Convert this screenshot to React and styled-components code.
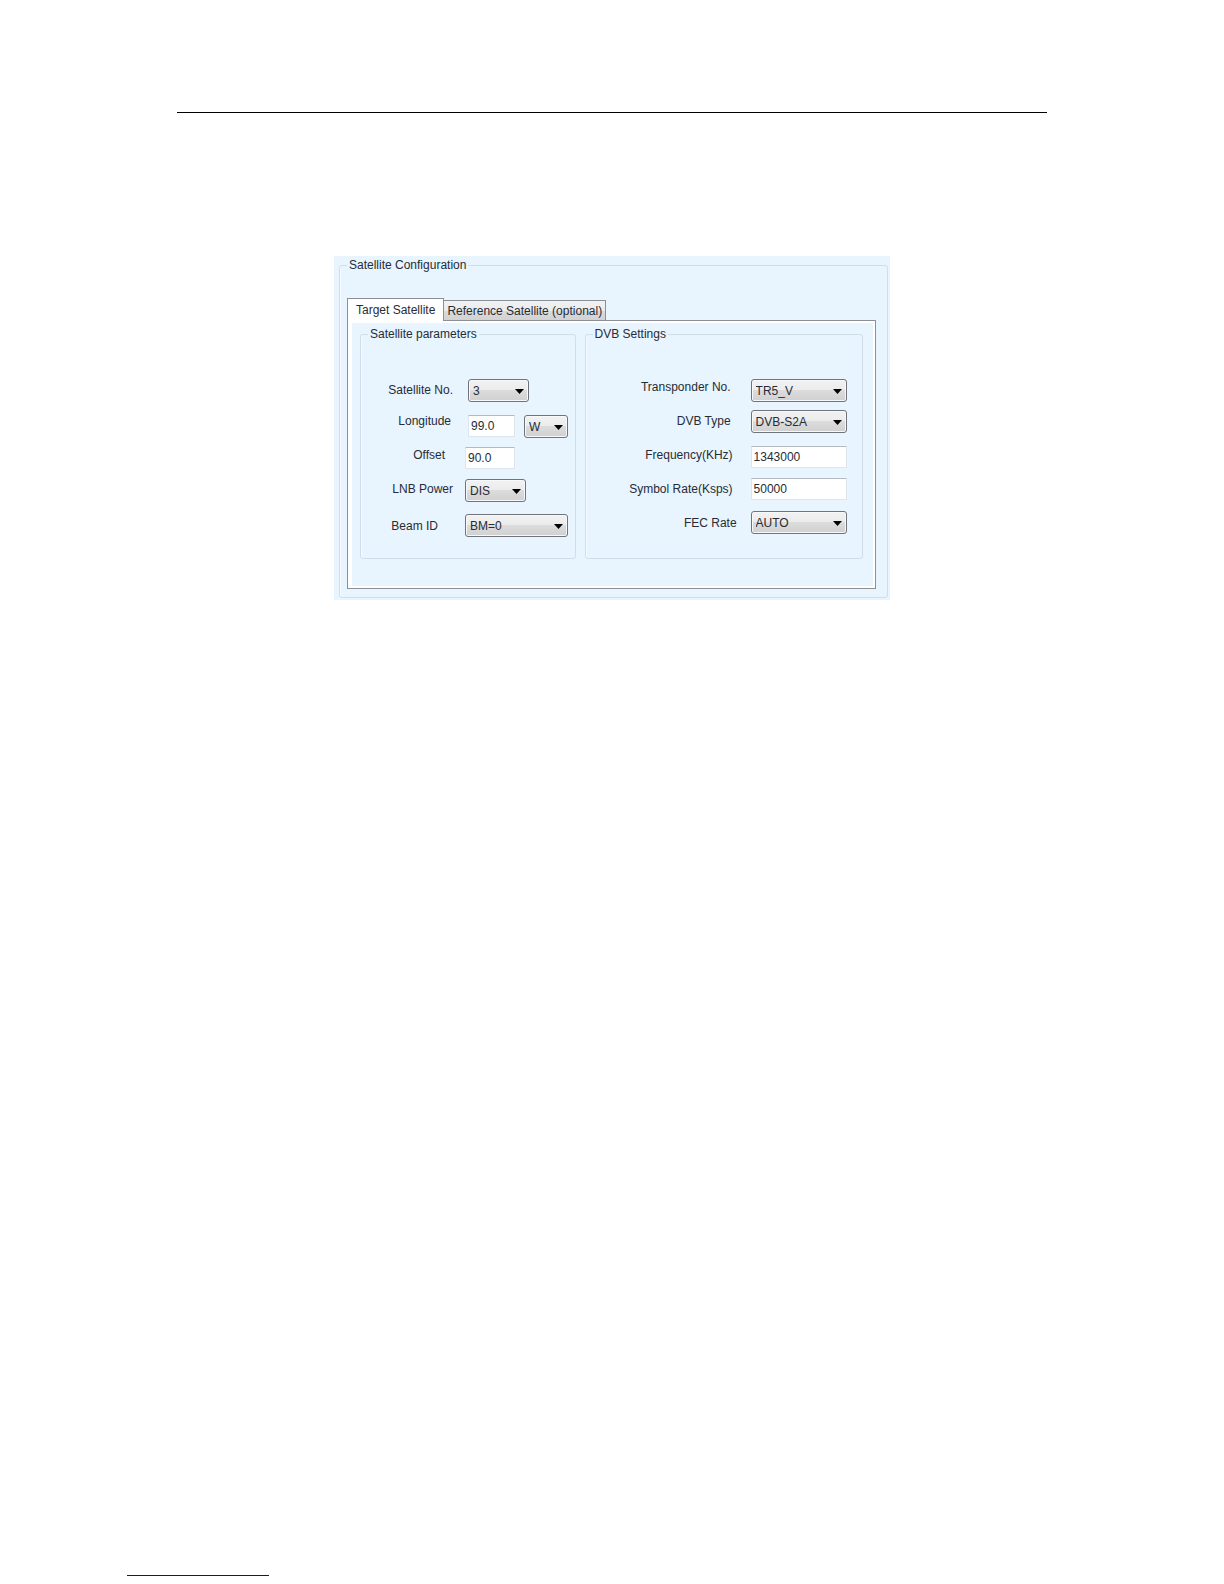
import React, { useState } from "react";
import styled, { createGlobalStyle } from "styled-components";

const GlobalStyle = createGlobalStyle`
  *, *::before, *::after { box-sizing: border-box; }
  body { margin: 0; background: #fff; }
  body, button, input, select {
    font-family: "Liberation Sans", Arial, sans-serif;
    font-size: 12px;
    line-height: 16px;
    color: #262c36;
  }
`;

const Page = styled.main`
  display: flex;
  flex-direction: column;
  padding: 112px 127px 8px;
`;

const HeaderRule = styled.hr`
  width: calc(100% - 100px);
  height: 1px;
  margin: 0 auto 143px;
  border: 0;
  background: #000;
`;

const FooterRule = styled.hr`
  width: 142px;
  height: 1px;
  margin: 975px 0 0;
  border: 0;
  background: #10107c;
`;

const Panel = styled.section`
  width: 100%;
  max-width: 556px;
  margin: 0 auto;
  padding: 1px 2px 2px 5px;
  background: #e8f4fe;
`;

const Group = styled.fieldset`
  min-width: 0;
  margin: 0;
  padding: ${(p) => p.$padding || "0"};
  border: 1px solid #cfdfea;
  border-radius: 3px;
  box-shadow: inset 1px 0 #f4faff;
`;

const Legend = styled.legend`
  margin-left: ${(p) => p.$indent}px;
  padding: 0 2px;
`;

const TabList = styled.div`
  display: flex;
  align-items: flex-end;
`;

const Tab = styled.button`
  height: ${(p) => (p.$active ? 23 : 20)}px;
  margin: 0 0 ${(p) => (p.$active ? -1 : 0)}px;
  padding: 0 ${(p) => (p.$active ? 8 : 3)}px;
  border: 1px solid #8b8f98;
  border-bottom: 0;
  border-left-width: ${(p) => (p.$first ? 1 : 0)}px;
  background: ${(p) => (p.$active ? "#fff" : "linear-gradient(#f2f2f2, #ebebeb 50%, #dadada 50%, #d2d2d2)")};
  position: relative;
  white-space: nowrap;
`;

const TabPanel = styled.div`
  display: grid;
  grid-template-columns: 216fr 279fr;
  gap: 9px;
  padding: 5px 12px 29px;
  border: 1px solid #8b8f98;
  outline: 2px solid #fff;
  outline-offset: -3px;
  box-shadow: inset 4px 0 #fff;
  background: #e8f4fe;
`;

const Columns = styled.div`
  display: grid;
  grid-template-columns: ${(p) => p.$labels}px 1fr;
`;

const Stack = styled.div`
  display: grid;
  grid-template-rows: ${(p) => p.$rows};
  align-items: start;
  align-content: start;
  padding-top: ${(p) => p.$top || 0}px;
`;

const Label = styled.label`
  padding-right: ${(p) => p.$gap}px;
  text-align: right;
  white-space: nowrap;
`;

const Line = styled.div`
  display: flex;
  gap: 9px;
  padding-left: ${(p) => (p.$inset ? 3 : 0)}px;
`;

const Box = styled.input`
  width: ${(p) => p.$width}px;
  height: 22px;
  padding: 0 2px;
  border: 1px solid #dde5ee;
  border-top-color: #b4bac4;
  background: #fff;
`;

const SelectWrap = styled.span`
  position: relative;
  display: block;
  width: ${(p) => p.$width}px;
  height: 23px;
`;

const Select = styled.select`
  appearance: none;
  width: 100%;
  height: 100%;
  padding: 0 16px 0 4px;
  border: 1px solid #70747a;
  border-radius: 3px;
  background: linear-gradient(#f2f2f2, #ebebeb 50%, #dcdcdc 50%, #d0d0d0);
  box-shadow: inset 0 0 0 1px #f6f8fa;
`;

const Arrow = styled.svg`
  position: absolute;
  right: 5px;
  top: 10px;
  pointer-events: none;
`;

function Dropdown({ id, width, value, label }) {
  return (
    <SelectWrap $width={width}>
      <Select id={id} aria-label={label} defaultValue={value}>
        <option>{value}</option>
      </Select>
      <Arrow width="9" height="5" viewBox="0 0 9 5" aria-hidden="true">
        <path d="M0 0H9L4.5 5Z" fill="#000" />
      </Arrow>
    </SelectWrap>
  );
}

export default function App() {
  const [tab, setTab] = useState(0);
  return (
    <Page>
      <GlobalStyle />
      <HeaderRule />
      <Panel>
        <Group $padding="25px 11px 8px 7px">
          <Legend $indent={0}>Satellite Configuration</Legend>
          <TabList role="tablist">
            {["Target Satellite", "Reference Satellite (optional)"].map((name, i) => (
              <Tab
                key={name}
                type="button"
                role="tab"
                aria-selected={tab === i}
                $active={tab === i}
                $first={i === 0}
                onClick={() => setTab(i)}
              >
                {name}
              </Tab>
            ))}
          </TabList>
          <TabPanel role="tabpanel">
            <Group $padding="37px 0 21px">
              <Legend $indent={7}>Satellite parameters</Legend>
              <Columns $labels={104}>
                <Stack $rows="31px 34px 34px 37px 16px" $top={3}>
                  <Label htmlFor="satNo" $gap={12}>Satellite No.</Label>
                  <Label htmlFor="longitude" $gap={14}>Longitude</Label>
                  <Label htmlFor="offset" $gap={20}>Offset</Label>
                  <Label htmlFor="lnb" $gap={12}>LNB Power</Label>
                  <Label htmlFor="beam" $gap={27}>Beam ID</Label>
                </Stack>
                <Stack $rows="36px 32px 32px 35px 23px">
                  <Line $inset>
                    <Dropdown id="satNo" width={61} value="3" />
                  </Line>
                  <Line $inset>
                    <Box id="longitude" $width={47} defaultValue="99.0" />
                    <Dropdown width={44} value="W" label="Hemisphere" />
                  </Line>
                  <Box id="offset" $width={50} defaultValue="90.0" />
                  <Dropdown id="lnb" width={61} value="DIS" />
                  <Dropdown id="beam" width={103} value="BM=0" />
                </Stack>
              </Columns>
            </Group>
            <Group $padding="37px 0 21px">
              <Legend $indent={7}>DVB Settings</Legend>
              <Columns $labels={165}>
                <Stack $rows="34px 34px 34px 34px 16px">
                  <Label htmlFor="transponder" $gap={20}>Transponder No.</Label>
                  <Label htmlFor="dvbType" $gap={20}>DVB Type</Label>
                  <Label htmlFor="frequency" $gap={18}>Frequency(KHz)</Label>
                  <Label htmlFor="symbolRate" $gap={18}>Symbol Rate(Ksps)</Label>
                  <Label htmlFor="fec" $gap={14}>FEC Rate</Label>
                </Stack>
                <Stack $rows="31px 36px 32px 33px 23px">
                  <Dropdown id="transponder" width={96} value="TR5_V" />
                  <Dropdown id="dvbType" width={96} value="DVB-S2A" />
                  <Box id="frequency" $width={96} defaultValue="1343000" />
                  <Box id="symbolRate" $width={96} defaultValue="50000" />
                  <Dropdown id="fec" width={96} value="AUTO" />
                </Stack>
              </Columns>
            </Group>
          </TabPanel>
        </Group>
      </Panel>
      <FooterRule />
    </Page>
  );
}
